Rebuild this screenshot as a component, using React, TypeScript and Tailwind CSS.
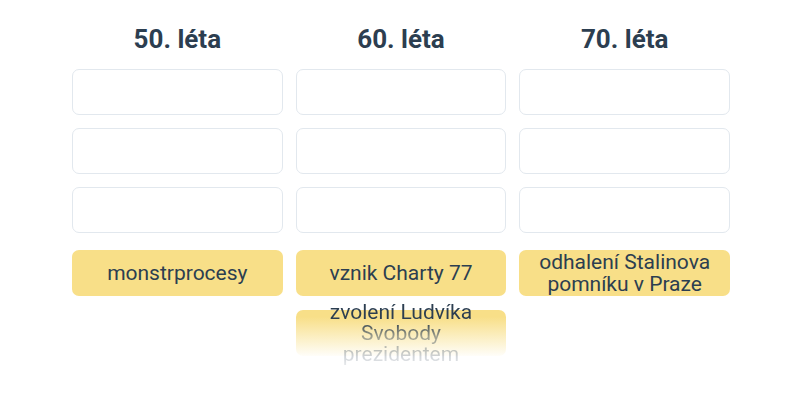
import React from "react";

const Box = () => (
  <div className="h-[46px] rounded-[7px] border border-[#e2e8ee] bg-white" />
);

const Card = ({ children, fade = false }: { children: React.ReactNode; fade?: boolean }) => (
  <div
    className={
      "h-[46px] rounded-[7px] flex items-center justify-center px-2 text-center text-[21px] " +
      (fade
        ? "leading-[21px] bg-[linear-gradient(to_bottom,#f8df88_15%,rgba(248,223,136,0.05)_100%)]"
        : "leading-[22px] bg-[#f8df88] text-[#2c3e50]")
    }
  >
    {fade ? (
      <div className="shrink-0 bg-[linear-gradient(to_bottom,#2c3e50_30%,rgba(44,62,80,0.45)_55%,rgba(44,62,80,0.12)_100%)] bg-clip-text text-transparent">
        {children}
      </div>
    ) : (
      <div className="shrink-0">{children}</div>
    )}
  </div>
);

export default function App() {
  return (
    <div
      className="w-[800px] h-[400px] bg-white pt-[23px] pl-[72px] pr-[70px]"
      style={{ fontFamily: "Roboto, 'Noto Sans', sans-serif" }}
    >
      <div className="grid grid-cols-3 gap-x-[13px] items-start">
        {[
          { title: "50. léta", cards: [<>monstrprocesy</>] },
          {
            title: "60. léta",
            cards: [<>vznik Charty 77</>],
            extra: (
              <Card fade>
                zvolení Ludvíka
                <br />
                Svobody
                <br />
                prezidentem
              </Card>
            ),
          },
          {
            title: "70. léta",
            cards: [
              <>
                odhalení Stalinova
                <br />
                pomníku v Praze
              </>,
            ],
          },
        ].map((col, i) => (
          <div key={i} className="flex flex-col">
            <div className="h-[33px] leading-[33px] text-center text-[26px] font-bold text-[#2c3e50]">
              {col.title}
            </div>
            <div className="mt-[13px] flex flex-col gap-[13px]">
              <Box />
              <Box />
              <Box />
            </div>
            <div className="mt-[17px] flex flex-col gap-[14px]">
              {col.cards.map((c, j) => (
                <Card key={j}>{c}</Card>
              ))}
              {col.extra}
            </div>
          </div>
        ))}
      </div>
    </div>
  );
}
